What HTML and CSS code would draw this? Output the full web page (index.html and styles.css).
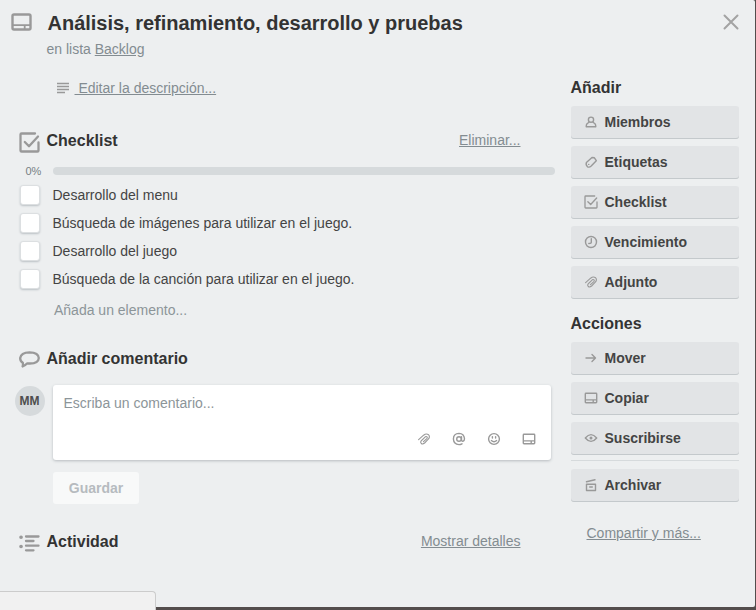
FILE: index.html
```html
<!DOCTYPE html>
<html lang="es">
<head>
<meta charset="utf-8">
<title>Tarjeta</title>
<link rel="stylesheet" href="styles.css">
</head>
<body>
<svg class="defs" width="0" height="0">
  <symbol id="card" viewBox="0 0 21 18"><path d="M3 1.500h15q1.500 0 1.500 1.500v12q0 1.500-1.500 1.500H3q-1.500 0-1.500-1.500V3q0-1.500 1.500-1.500z"/><path class="thin" d="M2 12.200h17M13.700 13v3"/></symbol>
  <symbol id="small-card" viewBox="0 0 14 14"><path d="M2 2.200h10q.7 0 .7.700v8.200q0 .7-.7.700H2q-.7 0-.7-.7V2.900q0-.7.7-.7zM1.500 8.900h11M9.200 9.500v2"/></symbol>
  <symbol id="check" viewBox="0 0 21 21"><path d="M16 1.500H2.600q-1.100 0-1.100 1.100v15.800q0 1.100 1.100 1.100h15.800q1.100 0 1.100-1.100V10.500M5.800 10l4.200 4.200L19 4.500"/></symbol>
  <symbol id="clip" viewBox="0 0 14 14"><path d="M1.600 7.600L6.600 3.200q2.600-2 4.900-.5 1.900 1.900-.2 4.500L7.600 11q-1.900 1.600-3.300.5-1.300-1.400.3-3.100l3.700-3.600q1-.7 1.700 0 .6.900-.2 1.800L6.500 9.700M4 9.200l3.300-3.300"/></symbol>
</svg>
<div class="dialog">
  <header class="head">
    <svg class="icon head-icon"><use href="#card"/></svg>
    <div class="head-text">
      <h1>Análisis, refinamiento, desarrollo y pruebas</h1>
      <p>en lista <a>Backlog</a></p>
    </div>
    <svg class="icon close" viewBox="0 0 16 16"><path d="M1.500 1.500l13 13M14.500 1.500l-13 13"/></svg>
  </header>
  <div class="content">
    <main>
      <div class="describe">
        <svg class="icon" viewBox="0 0 14 12"><path d="M1 1.500h12M1 4.500h12M1 7.500h12M1 10.500h8"/></svg>
        <a>&nbsp;Editar la descripción...</a>
      </div>
      <section class="checklist">
        <div class="title"><svg class="icon check"><use href="#check"/></svg><h2>Checklist</h2><a class="remove">Eliminar...</a></div>
        <div class="progress"><span>0%</span><div class="bar"></div></div>
        <ul>
          <li><i></i>Desarrollo del menu</li>
          <li><i></i>Búsqueda de imágenes para utilizar en el juego.</li>
          <li><i></i>Desarrollo del juego</li>
          <li><i></i>Búsqueda de la canción para utilizar en el juego.</li>
        </ul>
        <div class="add-item">Añada un elemento...</div>
      </section>
      <section class="comment">
        <div class="title"><svg class="icon bubble" viewBox="0 0 21 17"><path d="M3.600 15.500q.6-1.500.2-3.700Q1 10 1.200 7 2 1.400 10.500 1.300 19.500 1.400 19.800 7q-.3 5.600-9.300 5.500L8.300 12.300Q6 14.700 3.600 15.500z"/></svg><h2>Añadir comentario</h2></div>
        <div class="compose">
          <div class="avatar">MM</div>
          <div class="box">
            <p>Escriba un comentario...</p>
            <div class="tools">
              <svg class="icon clip"><use href="#clip"/></svg>
              <svg class="icon" viewBox="0 0 14 14"><circle cx="7" cy="7" r="2.300"/><path d="M9.500 4.700v3.400q.2 1.300 1.400 1.200 1.600-.4 1.600-2.500Q12 1.500 7 1.400 1.500 1.600 1.400 7q.3 5.300 5.600 5.600 1.500 0 3-.8"/></svg>
              <svg class="icon" viewBox="0 0 14 14"><circle cx="7" cy="7" r="5.400"/><path d="M5.400 4.600v1.400M8.600 4.600v1.400M4.400 8.600q2.600 2.400 5.200 0"/></svg>
              <svg class="icon"><use href="#small-card"/></svg>
            </div>
          </div>
        </div>
        <button class="save">Guardar</button>
      </section>
      <section class="title activity"><svg class="icon" viewBox="0 0 21 17"><path d="M7 1.500h12.500M7 6h7.500M7 10.700h12.500M7 15.300h7.500"/><path class="dots" d="M2 2.300h.1M2 11.500h.1"/></svg><h2>Actividad</h2><a class="remove">Mostrar detalles</a></section>
    </main>
    <aside>
      <h2>Añadir</h2>
      <div class="group">
        <button><svg class="icon" viewBox="0 0 14 14"><circle cx="7" cy="4.700" r="2.600"/><path d="M5 7.200L3 8.700Q2.200 9.700 2.200 11.800h9.600q0-2.100-.8-3.100L9 7.200"/></svg>Miembros</button>
        <button><svg class="icon" viewBox="0 0 14 14"><path d="M2.400 7.600L8 2.500l2.400.3 1.900 2.900-5.100 5.400q-1.800 1.600-3.700.7-2-1.800-1.100-4.200zM4.700 9.400h.1"/></svg>Etiquetas</button>
        <button><svg class="icon side-check"><use href="#check"/></svg>Checklist</button>
        <button><svg class="icon" viewBox="0 0 14 14"><circle cx="7" cy="7" r="5.500"/><path d="M7.300 3.700v3.500q0 1.200-2.500 1.300"/></svg>Vencimiento</button>
        <button><svg class="icon clip"><use href="#clip"/></svg>Adjunto</button>
      </div>
      <h2>Acciones</h2>
      <div class="group">
        <button><svg class="icon" viewBox="0 0 14 14"><path d="M2 7h9.500M8 3.500L11.500 7 8 10.500"/></svg>Mover</button>
        <button><svg class="icon"><use href="#small-card"/></svg>Copiar</button>
        <button><svg class="icon" viewBox="0 0 14 14"><path d="M1.300 7Q7 .2 12.700 7 7 13.800 1.300 7z"/><circle cx="7" cy="7" r=".8"/></svg>Suscribirse</button>
      </div>
      <hr>
      <button><svg class="icon" viewBox="0 0 14 14"><path d="M2.500 3.800l8.500-2M2.500 6.200h9v6.300h-9zM5.700 9h2.600"/></svg>Archivar</button>
      <a class="share">Compartir y más...</a>
    </aside>
  </div>
</div>
<div class="status"></div>
</body>
</html>
```

FILE: styles.css
```css
* { box-sizing: border-box; }
body { margin: 0; width: 756px; height: 610px; overflow: hidden; background: #534d4c; font: 14px/20px "Liberation Sans", Arial, sans-serif; color: #444; }
.defs { position: absolute; }
h1, h2, p, ul { margin: 0; padding: 0; }
h1 { font-size: 20px; line-height: 24px; color: #333; }
h2 { font-size: 16px; line-height: 20px; color: #333; }
a { color: #838c91; text-decoration: underline; }
.icon { display: block; flex: none; width: 14px; height: 14px; fill: none; stroke: #999; stroke-width: 1.4; stroke-linecap: round; stroke-linejoin: round; }
.thin { stroke-width: 1.8; }
.clip { stroke-width: 1.1; }
.dialog { width: 755px; height: 607px; background: #edeff0; border-radius: 0 2px 2px 0; }
.head { display: flex; height: 78px; padding: 11px 16px 0 11px; }
.head-icon { width: 21px; height: 18px; margin-top: 2px; stroke-width: 2.4; }
.head-text { flex: 1; padding-left: 14.5px; }
.head-text h1 { padding-left: 1px; letter-spacing: -.01px; }
.head-text p { padding-top: 4px; color: #838c91; }
.close { width: 16px; height: 16px; margin-top: 3px; stroke: #a3a3a3; stroke-width: 2; }
.content { display: flex; gap: 16px; }
main { width: 555px; }
.describe { display: flex; gap: 4.5px; padding-left: 56px; height: 53px; }
.describe .icon { height: 12px; margin-top: 4px; stroke-width: 1.5; stroke-linecap: butt; }
.title { display: flex; padding: 0 34.5px 0 19px; height: 20px; }
.title h2 { padding-left: 6.5px; flex: 1; }
.title .icon { width: 21px; height: 17px; stroke-width: 2.3; }
.title .check { height: 21px; margin-top: 1px; stroke-width: 2.3; }
.remove { margin-top: -1px; }
.progress { display: flex; align-items: center; height: 20px; margin-top: 10px; color: #777f84; font-size: 11px; }
.progress span { width: 53px; padding-left: 25.5px; }
.bar { flex: 1; height: 8px; border-radius: 4px; background: #d6dadc; }
ul { list-style: none; padding: 4px 0 0 20px; }
li { display: flex; gap: 12.5px; height: 28px; color: #444; }
li i { width: 20px; height: 20px; border: 1px solid #dcdfe1; border-radius: 3px; background: #fff; box-shadow: 0 1px 2px #bcc1c5; }
.add-item { padding: 3px 0 0 54px; color: #8c9599; }
.comment { margin-top: 29px; }
.bubble { margin-top: 2px; }
.compose { display: flex; gap: 8px; margin-top: 16px; padding-left: 15px; }
.avatar { width: 30px; height: 30px; margin-top: 1px; padding-right: 1px; border-radius: 50%; background: #d6dadc; color: #4d4d4d; font-size: 12px; font-weight: bold; line-height: 30px; text-align: center; }
.box { width: 498px; height: 75px; padding: 8px 15px 0 10.5px; border-radius: 3px; background: #fff; box-shadow: 0 1px 3px #b6bbbf; color: #8c9599; }
.tools { display: flex; justify-content: flex-end; gap: 21px; padding-top: 19px; }
button { display: block; padding: 0; border: 0; font: bold 14px/32px "Liberation Sans", Arial, sans-serif; }
.save { width: 86px; height: 32px; margin: 12px 0 0 53px; border-radius: 3px; background: #f8f9f9; color: #b6bbbf; }
.activity { margin-top: 28px; }
.activity .icon { margin-top: 3px; }
.activity .dots { stroke-width: 3.6; }
aside { width: 168px; }
aside h2 { height: 28px; margin-left: -.5px; }
.group { display: grid; gap: 7px; }
aside button { display: flex; align-items: center; gap: 6.5px; width: 168px; height: 33px; padding: 0 0 1px 13px; border-radius: 3px; background: #e2e4e6; box-shadow: inset 0 -1px #c4c9cc; color: #444; }
.group + h2 { margin-top: 15px; }
.side-check { stroke-width: 2; }
hr { height: 1px; margin: 5px 0 8px; border: 0; background: #d6dadc; }
.share { display: block; margin: 21px 0 0 15.5px; }
.status { position: absolute; left: 0; top: 591px; width: 156px; height: 19px; border: solid #ccc; border-width: 1px 1px 0 0; border-radius: 0 4px 0 0; background: #f1f1f1; }
```
